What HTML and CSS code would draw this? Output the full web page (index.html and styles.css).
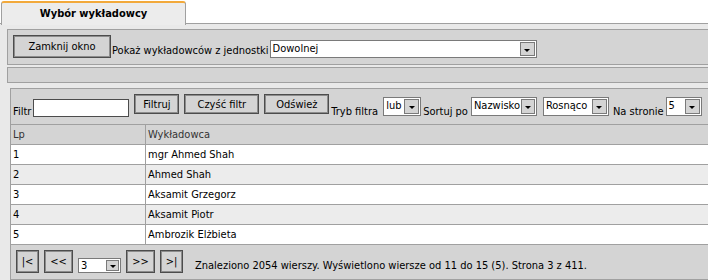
FILE: index.html
```html
<!DOCTYPE html>
<html lang="pl">
<head>
  <meta charset="UTF-8" />
  <title>Wybór wykładowcy</title>
  <link rel="stylesheet" href="styles.css">
</head>
<body>
  <div class="tabs">
    <div class="tab">Wybór wykładowcy</div>
  </div>

  <div class="page">
    <div class="bar bar-top">
      <button class="btn btn-close">Zamknij okno</button>
      <span class="label label-unit">Pokaż wykładowców z jednostki</span>
      <span class="select select-unit"><span class="val">Dowolnej</span><span class="arrow"></span></span>
    </div>
    <div class="bar bar-empty"></div>

    <div class="grid">
      <div class="filters">
        <span class="label">Filtr</span>
        <input class="filter-input" type="text">
        <button class="btn btn-small btn-filter">Filtruj</button>
        <button class="btn btn-small btn-clear">Czyść filtr</button>
        <button class="btn btn-small btn-refresh">Odśwież</button>
        <span class="label">Tryb filtra</span>
        <span class="select select-mode"><span class="val">lub</span><span class="arrow"></span></span>
        <span class="label label-sort">Sortuj po</span>
        <span class="select select-sort"><span class="val">Nazwisko</span><span class="arrow"></span></span>
        <span class="select select-order"><span class="val">Rosnąco</span><span class="arrow"></span></span>
        <span class="label label-page">Na stronie</span>
        <span class="select select-count"><span class="val">5</span><span class="arrow"></span></span>
      </div>

      <table class="list">
        <thead>
          <tr><th class="lp">Lp</th><th>Wykładowca</th></tr>
        </thead>
        <tbody>
          <tr><td class="lp">1</td><td>mgr Ahmed Shah</td></tr>
          <tr class="alt"><td class="lp">2</td><td>Ahmed Shah</td></tr>
          <tr><td class="lp">3</td><td>Aksamit Grzegorz</td></tr>
          <tr class="alt"><td class="lp">4</td><td>Aksamit Piotr</td></tr>
          <tr><td class="lp">5</td><td>Ambrozik Elżbieta</td></tr>
        </tbody>
      </table>

      <div class="pager">
        <button class="btn btn-first">|&lt;</button>
        <button class="btn btn-prev">&lt;&lt;</button>
        <span class="select select-pagenum"><span class="val">3</span><span class="arrow"></span></span>
        <button class="btn btn-next">&gt;&gt;</button>
        <button class="btn btn-last">&gt;|</button>
        <span class="pager-info">Znaleziono 2054 wierszy. Wyświetlono wiersze od 11 do 15 (5). Strona 3 z 411.</span>
      </div>
    </div>
  </div>
</body>
</html>
```

FILE: styles.css
```css
* {
  box-sizing: border-box;
}

body {
  margin: 0;
  width: 708px;
  height: 280px;
  overflow: hidden;
  background: #fff;
  font-family: "DejaVu Sans Condensed", "DejaVu Sans", sans-serif;
  font-stretch: semi-condensed;
  font-size: 11px;
  color: #000;
}

.tabs {
  display: flex;
  height: 24px;
  border-bottom: 1px solid #a0a0a0;
}

.tab {
  width: 185px;
  height: 24px;
  margin: 1px 0 0 1px;
  border: 1px solid #a0a0a0;
  border-top: 2px solid #f2a93b;
  border-bottom: none;
  border-radius: 3px 3px 0 0;
  background: #ececec;
  font-weight: bold;
  font-size: 11px;
  text-align: center;
  line-height: 21px;
}

.page {
  height: 256px;
  padding-top: 5px;
  background: #e9e9e9;
}

.bar {
  margin-left: 7px;
  border: 1px solid #a0a0a0;
  border-right: none;
  background: #d4d4d4;
}

.bar-top {
  display: flex;
  align-items: flex-end;
  height: 36px;
  padding: 5px 0 6px 5px;
}

.bar-empty {
  height: 16px;
  margin-top: 2px;
}

.label {
  flex: none;
  line-height: 14px;
  white-space: nowrap;
}

.label-unit {
  margin: 0 1px 0 1px;
}

.btn {
  flex: none;
  height: 23px;
  padding: 0;
  border: 1px solid #4c4c4c;
  box-shadow: inset 0 0 0 1px #8c8c8c;
  background: #d4d4d4;
  font: inherit;
  color: #000;
}

.btn-close {
  width: 98px;
}

.btn-small {
  height: 20px;
  margin-bottom: 10px;
}

/* fake dropdowns */
.select {
  flex: none;
  display: flex;
  height: 18px;
  border: 1px solid #7a7a7a;
  background: #fff;
}

.select .val {
  flex: 1;
  padding-left: 2px;
  line-height: 15px;
  white-space: nowrap;
}

.select .arrow {
  display: flex;
  align-items: center;
  justify-content: center;
  width: 15px;
  margin: 1px;
  border: 1px solid #7a7a7a;
  background: #d4d4d4;
}

.select .arrow::after {
  content: "";
  border-left: 3px solid transparent;
  border-right: 3px solid transparent;
  border-top: 3px solid #000;
  margin-top: 2px;
}

.select-unit {
  width: 267px;
}

.grid {
  margin: 5px 0 0 10px;
  border-left: 1px solid #a0a0a0;
  border-top: 1px solid #a0a0a0;
  background: #d4d4d4;
}

.filters {
  display: flex;
  align-items: flex-end;
  height: 35px;
  padding-left: 2px;
}

.filters .label {
  margin-bottom: 5px;
}

.filters .select {
  height: 19px;
  margin-bottom: 8px;
}

.filter-input {
  flex: none;
  width: 96px;
  height: 18px;
  margin: 0 0 7px 2px;
  border: 1px solid #4c4c4c;
  background: #fff;
}

.btn-filter {
  width: 45px;
  margin-left: 5px;
}

.btn-clear {
  width: 75px;
  margin-left: 5px;
}

.btn-refresh {
  width: 65px;
  margin-left: 5px;
  margin-right: 2px;
}

.select-mode {
  width: 38px;
  margin-left: 5px;
}

.label-sort {
  margin-left: 2px;
}

.select-sort {
  width: 66px;
  margin-left: 3px;
}

.select-order {
  width: 66px;
  margin-left: 6px;
}

.label-page {
  margin-left: 4px;
}

.select-count {
  width: 36px;
  margin-left: 2px;
}

.list {
  width: 100%;
  border-spacing: 0;
}

.list th,
.list td {
  height: 20px;
  padding: 0 2px;
  border-top: 1px solid #a0a0a0;
  text-align: left;
  font-weight: normal;
  line-height: 19px;
  background: #fff;
}

.list th {
  background: #d4d4d4;
  color: #333;
}

.list tr.alt td {
  background: #ececec;
}

.list .lp {
  width: 135px;
  border-right: 1px solid #a0a0a0;
}

.pager {
  display: flex;
  align-items: flex-end;
  height: 36px;
  padding: 5px 0 6px 5px;
  border-top: 1px solid #a0a0a0;
  border-bottom: 1px solid #a0a0a0;
}

.btn-first,
.btn-last {
  width: 23px;
}

.btn-prev,
.btn-next {
  width: 29px;
}

.btn-prev,
.btn-next,
.btn-last {
  margin-left: 5px;
}

.select-pagenum {
  width: 43px;
  height: 15px;
  margin-left: 5px;
}

.select-pagenum .arrow {
  width: 13px;
}

.select-pagenum .val {
  line-height: 13px;
}

.pager-info {
  flex: none;
  margin: 0 0 0 12px;
  line-height: 14px;
  white-space: nowrap;
}
```
